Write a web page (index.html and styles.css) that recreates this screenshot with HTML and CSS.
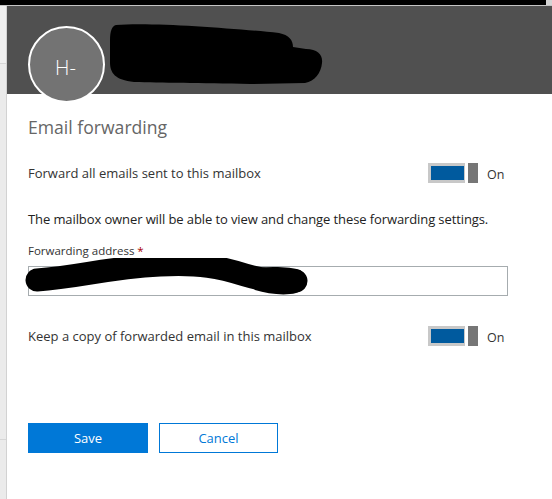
FILE: index.html
```html
<!DOCTYPE html>
<html lang="en">
<head>
<meta charset="utf-8">
<title>Email forwarding</title>
<link rel="stylesheet" href="styles.css">
</head>
<body>
<div class="topbar"><div class="topbar-black"></div><div class="topbar-end"></div></div>
<div class="topline"></div>
<div class="main">
  <div class="backdrop">
    <div class="bd-seg bd-a"></div>
    <div class="bd-seg bd-b"></div>
    <div class="bd-seg bd-c"></div>
  </div>
  <div class="panel">
    <div class="header">
      <div class="avatar">H-</div>
      <svg class="redact-name" width="230" height="70" viewBox="100 20 230 70" aria-hidden="true">
        <path d="M116,25 C150,22 230,28 279,33 C289,35 293,40 293,47 L306,49 C318,49 323,55 322,63 C321,73 315,81 305,83 L250,84 C200,83 160,83 134,82 C115,80 110,73 110,62 L110,40 C110,31 112,26 116,25 Z" fill="#000"/>
      </svg>
    </div>
    <div class="content">
      <h1 class="title">Email forwarding</h1>
      <div class="row row-first">
        <span class="label">Forward all emails sent to this mailbox</span>
        <div class="switch-group">
          <span class="switch"><span class="track"><span class="fill"></span></span><span class="thumb"></span></span>
          <span class="state">On</span>
        </div>
      </div>
      <p class="note">The mailbox owner will be able to view and change these forwarding settings.</p>
      <label class="field-label">Forwarding address <span class="req">*</span></label>
      <div class="input-wrap">
        <div class="input"></div>
        <svg class="redact-addr" width="300" height="40" viewBox="20 258 300 40" aria-hidden="true">
          <path d="M37,280 C80,277 105,268 160,265 C200,263 220,267 245,275 C265,281 283,282 296,281" fill="none" stroke="#000" stroke-width="23" stroke-linecap="round"/>
          <path d="M240,270 C260,266 290,266 300,270 C310,276 309,290 296,293 C285,296 268,294 255,290 Z" fill="#000"/>
        </svg>
      </div>
      <div class="row row-second">
        <span class="label">Keep a copy of forwarded email in this mailbox</span>
        <div class="switch-group">
          <span class="switch"><span class="track"><span class="fill"></span></span><span class="thumb"></span></span>
          <span class="state">On</span>
        </div>
      </div>
      <div class="actions">
        <button class="btn btn-primary">Save</button>
        <button class="btn btn-secondary">Cancel</button>
      </div>
    </div>
  </div>
</div>
</body>
</html>
```
FILE: styles.css
```css
* { box-sizing: border-box; }
html, body { margin: 0; padding: 0; }
body {
  width: 552px;
  height: 499px;
  overflow: hidden;
  background: #fff;
  font-family: "Open Sans", "Noto Sans", sans-serif;
  color: #333;
}
.topbar { display: flex; height: 5px; }
.topbar-black { flex: 1; background: #000; }
.topbar-end { width: 6px; background: #d4d4d4; }
.topline { height: 1px; background: #c4c4c4; }
.main { display: flex; height: 493px; }
.backdrop {
  width: 7px;
  display: flex;
  flex-direction: column;
  background: #ebebeb;
  border-right: 1px solid #d2d2d2;
}
.bd-seg { border-bottom: 1px solid #d6d6d6; }
.bd-a { height: 58px; background: #efefef; }
.bd-b { height: 376px; }
.bd-c { flex: 1; border-bottom: none; }
.panel { flex: 1; position: relative; }
.header {
  height: 88px;
  background: #505050;
  position: relative;
}
.avatar {
  position: absolute;
  left: 21px;
  top: 20px;
  width: 77px;
  height: 77px;
  border-radius: 50%;
  border: 2px solid #fff;
  background: #737373;
  color: #fff;
  font-size: 20px;
  font-weight: 300;
  display: flex;
  align-items: center;
  justify-content: center;
  padding-top: 6px;
  padding-right: 2px;
  z-index: 2;
}
.redact-name { position: absolute; left: 93px; top: 14px; }
.content { padding: 0 0 0 21px; width: 501px; }
.title {
  margin: 21px 0 0;
  font-size: 17.6px;
  font-weight: 400;
  color: #666;
  line-height: 24px;
}
.row {
  display: flex;
  align-items: center;
  justify-content: space-between;
  height: 20px;
}
.row-first { margin-top: 24px; }
.row-second { margin-top: 30px; }
.label { font-size: 13px; color: #333; }
.switch-group { width: 80px; display: flex; align-items: center; }
.switch { display: flex; height: 20px; }
.track {
  width: 37px;
  height: 20px;
  background: #c8c8c8;
  padding: 3px 1px 3px 3px;
}
.fill { display: block; width: 33px; height: 14px; background: #005a9e; }
.thumb { width: 10px; height: 20px; background: #767676; margin-left: 3px; }
.state { margin-left: 9px; font-size: 12.5px; color: #333; padding-top: 2px; }
.note {
  margin: 27px 0 0;
  font-size: 13px;
  color: #222;
  line-height: 18px;
  letter-spacing: -0.1px;
}
.field-label {
  display: block;
  margin-top: 15px;
  font-size: 11.5px;
  color: #333;
  line-height: 16px;
}
.req { color: #a80000; }
.input-wrap { position: relative; margin-top: 7px; }
.input {
  width: 480px;
  height: 30px;
  border: 1px solid #a6acaf;
  background: #fff;
}
.redact-addr { position: absolute; left: -8px; top: -8px; }
.actions { display: flex; gap: 11px; margin-top: 77px; }
.btn {
  height: 30px;
  font-family: "Open Sans", "Noto Sans", sans-serif;
  font-size: 13px;
  padding: 0;
  border-radius: 0;
  cursor: pointer;
}
.btn-primary { width: 120px; background: #0078d7; color: #fff; border: none; }
.btn-secondary { width: 119px; background: #fff; color: #0078d7; border: 1px solid #0078d7; }
```
